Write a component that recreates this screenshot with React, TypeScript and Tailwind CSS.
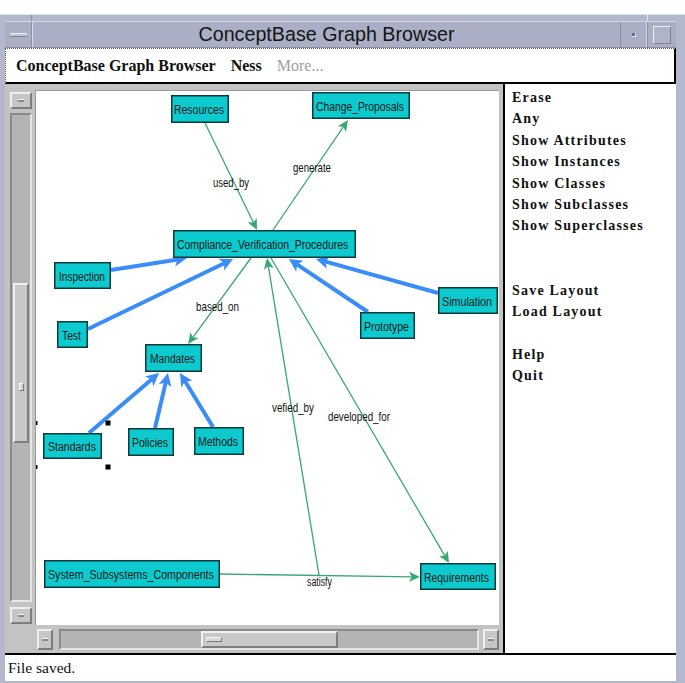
import React from "react";

type Pt = { x: number; y: number };

type NodeDef = {
  label: string;
  x: number;
  y: number;
  w: number;
  h: number;
  tx: number;
  tw: number;
  cy: number;
};

const NODES: NodeDef[] = [
  { label: "Resources", x: 170, y: 94, w: 58, h: 28, tx: 173, tw: 50, cy: 108 },
  { label: "Change_Proposals", x: 311, y: 91, w: 98, h: 27, tx: 315, tw: 88, cy: 105 },
  { label: "Compliance_Verification_Procedures", x: 172, y: 229, w: 183, h: 28, tx: 176, tw: 172, cy: 243 },
  { label: "Inspection", x: 53, y: 261, w: 57, h: 27, tx: 58, tw: 46, cy: 275 },
  { label: "Test", x: 56, y: 320, w: 31, h: 27, tx: 61, tw: 20, cy: 334 },
  { label: "Simulation", x: 437, y: 286, w: 60, h: 27, tx: 441, tw: 50, cy: 300 },
  { label: "Prototype", x: 359, y: 311, w: 55, h: 27, tx: 363, tw: 45, cy: 325 },
  { label: "Mandates", x: 144, y: 343, w: 57, h: 28, tx: 149, tw: 45, cy: 357 },
  { label: "Standards", x: 42, y: 432, w: 59, h: 26, tx: 47, tw: 48, cy: 445 },
  { label: "Policies", x: 127, y: 427, w: 46, h: 28, tx: 131, tw: 36, cy: 441 },
  { label: "Methods", x: 193, y: 426, w: 50, h: 28, tx: 197, tw: 40, cy: 440 },
  { label: "System_Subsystems_Components", x: 43, y: 559, w: 176, h: 28, tx: 47, tw: 166, cy: 573 },
  { label: "Requirements", x: 419, y: 562, w: 76, h: 27, tx: 423, tw: 65, cy: 576 },
];

const GREEN = "#38a873";
const BLUE = "#3a8df8";

const GREEN_EDGES: [Pt, Pt][] = [
  [{ x: 204, y: 122 }, { x: 256, y: 229 }],
  [{ x: 272, y: 229 }, { x: 347, y: 119 }],
  [{ x: 250, y: 257 }, { x: 187, y: 343 }],
  [{ x: 318, y: 574 }, { x: 266, y: 257 }],
  [{ x: 270, y: 257 }, { x: 448, y: 562 }],
  [{ x: 219, y: 573 }, { x: 419, y: 576 }],
];

const BLUE_EDGES: [Pt, Pt][] = [
  [{ x: 110, y: 269 }, { x: 186, y: 257 }],
  [{ x: 87, y: 328 }, { x: 232, y: 258 }],
  [{ x: 367, y: 311 }, { x: 288, y: 258 }],
  [{ x: 437, y: 292 }, { x: 315, y: 258 }],
  [{ x: 88, y: 432 }, { x: 158, y: 372 }],
  [{ x: 154, y: 427 }, { x: 167, y: 372 }],
  [{ x: 212, y: 426 }, { x: 179, y: 372 }],
];

const EDGE_LABELS = [
  { t: "used_by", x: 212, w: 36, cy: 182 },
  { t: "generate", x: 292, w: 38, cy: 167 },
  { t: "based_on", x: 195, w: 43, cy: 306 },
  { t: "vefied_by", x: 271, w: 42, cy: 407 },
  { t: "developed_for", x: 327, w: 62, cy: 416 },
  { t: "satisfy", x: 306, w: 25, cy: 581 },
];

// Arial / Liberation Sans advance widths (1/1000 em)
const ADV: Record<string, number> = {
  a: 556, b: 556, c: 500, d: 556, e: 556, f: 278, g: 556, h: 556, i: 222, j: 222, k: 500, l: 222, m: 833,
  n: 556, o: 556, p: 556, q: 556, r: 333, s: 500, t: 278, u: 556, v: 500, w: 722, x: 500, y: 500, z: 500,
  A: 667, B: 667, C: 722, D: 722, E: 667, F: 611, G: 778, H: 722, I: 278, J: 500, K: 667, L: 556, M: 833,
  N: 722, O: 778, P: 667, Q: 778, R: 722, S: 667, T: 611, U: 722, V: 667, W: 944, X: 667, Y: 667, Z: 611,
  _: 556,
};

function naturalWidth(s: string, size: number) {
  let sum = 0;
  for (const ch of s) sum += ADV[ch] ?? 556;
  return (sum * size) / 1000;
}

// Narrow label: set at its natural size, then squeezed horizontally to the given width.
function NarrowText({
  text,
  x,
  y,
  width,
  size,
  fill,
}: {
  text: string;
  x: number;
  y: number;
  width: number;
  size: number;
  fill: string;
}) {
  const sx = width / naturalWidth(text, size);
  return (
    <text
      transform={`translate(${x} ${y}) scale(${sx.toFixed(4)} 1)`}
      fontFamily="'Liberation Sans', Arial, sans-serif"
      fontSize={size}
      fill={fill}
    >
      {text}
    </text>
  );
}

function Edge({
  a,
  b,
  color,
  width,
  hl,
  hw,
}: {
  a: Pt;
  b: Pt;
  color: string;
  width: number;
  hl: number;
  hw: number;
}) {
  const dx = b.x - a.x;
  const dy = b.y - a.y;
  const len = Math.hypot(dx, dy);
  const ux = dx / len;
  const uy = dy / len;
  const bx = b.x - ux * hl;
  const by = b.y - uy * hl;
  const px = -uy;
  const py = ux;
  const pts = `${b.x},${b.y} ${bx + (px * hw) / 2},${by + (py * hw) / 2} ${b.x - ux * hl * 0.75},${b.y - uy * hl * 0.75} ${bx - (px * hw) / 2},${by - (py * hw) / 2}`;
  return (
    <g>
      <line x1={a.x} y1={a.y} x2={b.x - ux * hl * 0.7} y2={b.y - uy * hl * 0.7} stroke={color} strokeWidth={width} />
      <polygon points={pts} fill={color} />
    </g>
  );
}

function Graph() {
  return (
    <svg width={464} height={535} viewBox="35 90 464 535" className="block">
      {GREEN_EDGES.map(([a, b], i) => (
        <Edge key={`g${i}`} a={a} b={b} color={GREEN} width={1.3} hl={11} hw={10} />
      ))}
      {BLUE_EDGES.map(([a, b], i) => (
        <Edge key={`b${i}`} a={a} b={b} color={BLUE} width={4} hl={13} hw={13} />
      ))}
      {EDGE_LABELS.map((l) => (
        <NarrowText key={l.t} text={l.t} x={l.x} y={l.cy + 4} width={l.w} size={12} fill="#111" />
      ))}
      {NODES.map((n) => (
        <g key={n.label}>
          <rect x={n.x + 0.75} y={n.y + 0.75} width={n.w - 1.5} height={n.h - 1.5} fill="#0ccacd" stroke="#123a3c" strokeWidth={1.5} />
          <NarrowText text={n.label} x={n.tx} y={n.cy + 5} width={n.tw} size={13.5} fill="#0a1a1a" />
        </g>
      ))}
      {/* selection handles */}
      <rect x={104.5} y={419.5} width={5} height={5} fill="#000" />
      <rect x={104.5} y={463.5} width={5} height={5} fill="#000" />
      <rect x={35} y={420} width={1.5} height={4} fill="#000" />
      <rect x={35} y={464} width={1.5} height={4} fill="#000" />
    </svg>
  );
}

function ArrowButton({ className }: { className: string }) {
  return (
    <div
      className={`bg-[#c6c6c6] border-t-2 border-l-2 border-b-2 border-r-2 border-t-[#efefef] border-l-[#efefef] border-b-[#7d7d7d] border-r-[#7d7d7d] flex items-center justify-center ${className}`}
    >
      <div className="w-[6px] h-[3px] bg-[#8a8a8a] border-t border-[#f2f2f2]" />
    </div>
  );
}

const MENU_ITEMS: (string | null)[] = [
  "Erase",
  "Any",
  "Show Attributes",
  "Show Instances",
  "Show Classes",
  "Show Subclasses",
  "Show Superclasses",
  null,
  null,
  "Save Layout",
  "Load Layout",
  null,
  "Help",
  "Quit",
];

export default function App() {
  return (
    <div className="w-[685px] h-[683px] bg-white pt-[14px] overflow-hidden">
      <div className="h-[669px] bg-[#b4b8cc] flex flex-col pl-[5px] pr-[9px] border-t border-[#dcdee8]">
        {/* window title bar */}
        <div className="h-[6px] flex">
          <div className="w-[27px] border-r border-[#8d91a6]" />
          <div className="flex-1" />
          <div className="w-[29px] border-l border-[#e2e4ee]" />
        </div>
        <div className="h-[27px] flex bg-[#aaafc5] border-t border-[#d6d9e4] border-b border-b-[#8a8ea4]">
          <div className="w-[27px] flex items-center justify-center border-r border-[#8a8ea4]">
            <div className="w-[17px] h-[4px] bg-[#c3c6d6] border-t border-[#eceef5] border-b border-b-[#7c8096]" />
          </div>
          <div
            className="flex-1 flex items-center justify-center text-[19.7px] text-[#141414] border-l border-[#d6d9e4]"
            style={{ fontFamily: "'Liberation Sans', Arial, sans-serif" }}
          >
            ConceptBase Graph Browser
          </div>
          <div className="w-[27px] flex items-center justify-center border-l border-[#8a8ea4] border-r border-r-[#d6d9e4]">
            <div className="w-[4px] h-[4px] bg-[#6c7086] border-b border-r border-[#e6e8f0]" />
          </div>
          <div className="w-[29px] flex items-center justify-center border-l border-[#8a8ea4]">
            <div className="w-[18px] h-[18px] border border-t-[#eceef5] border-l-[#eceef5] border-b-[#7c8096] border-r-[#7c8096] bg-[#b0b4c9]" />
          </div>
        </div>

        {/* menu bar */}
        <div
          className="h-[36px] bg-white border-t border-l border-dotted border-[#555] border-b-2 border-b-black border-r-2 border-r-black flex items-center gap-[15px] pl-[10px] text-[16px] font-bold"
          style={{ fontFamily: "'Liberation Serif', 'Times New Roman', serif", borderBottomStyle: "solid", borderRightStyle: "solid" }}
        >
          <span className="text-[#111]">ConceptBase Graph Browser</span>
          <span className="text-[#111]">Ness</span>
          <span className="text-[#a0a0a0] font-normal">More...</span>
        </div>

        {/* main area */}
        <div className="h-[571px] flex">
          {/* graph panel */}
          <div className="w-[500px] bg-[#c3c3c3] border-r-2 border-b-2 border-black flex">
            {/* vertical scrollbar */}
            <div className="w-[28px] pl-[5px] pt-[8px] flex flex-col">
              <ArrowButton className="w-[22px] h-[17px]" />
              <div className="mt-[4px] w-[22px] h-[489px] bg-[#b4b4b4] border-t-2 border-l-2 border-t-[#8a8a8a] border-l-[#8a8a8a] border-b-2 border-r-2 border-b-[#e6e6e6] border-r-[#e6e6e6] flex flex-col items-center">
                <div className="mt-[168px] w-[16px] h-[160px] bg-[#c8c8c8] border-t-2 border-l-2 border-t-[#f0f0f0] border-l-[#f0f0f0] border-b-2 border-r-2 border-b-[#7e7e7e] border-r-[#7e7e7e] flex flex-col items-center pt-[98px]">
                  <div className="w-[5px] h-[8px] bg-[#d8d8d8] border border-t-[#fafafa] border-l-[#fafafa] border-b-[#777] border-r-[#777]" />
                </div>
              </div>
              <ArrowButton className="mt-[5px] w-[22px] h-[17px]" />
            </div>

            {/* canvas column */}
            <div className="ml-[2px] flex-1 flex flex-col pt-[6px]">
              <div className="w-[464px] h-[535px] bg-white border-t border-l border-[#9a9a9a] overflow-hidden">
                <Graph />
              </div>
              {/* horizontal scrollbar */}
              <div className="h-[28px] flex items-start pt-[4px] pl-[2px]">
                <ArrowButton className="w-[16px] h-[21px]" />
                <div className="ml-[6px] w-[420px] h-[21px] bg-[#b4b4b4] border-t-2 border-l-2 border-t-[#8a8a8a] border-l-[#8a8a8a] border-b-2 border-r-2 border-b-[#e6e6e6] border-r-[#e6e6e6] flex items-center">
                  <div className="ml-[140px] w-[137px] h-[17px] bg-[#c8c8c8] border-t-2 border-l-2 border-t-[#f0f0f0] border-l-[#f0f0f0] border-b-2 border-r-2 border-b-[#7e7e7e] border-r-[#7e7e7e] flex items-center pl-[3px]">
                    <div className="w-[16px] h-[5px] bg-[#d8d8d8] border border-t-[#fafafa] border-l-[#fafafa] border-b-[#777] border-r-[#777]" />
                  </div>
                </div>
                <ArrowButton className="ml-[4px] w-[16px] h-[21px]" />
              </div>
            </div>
          </div>

          {/* command panel */}
          <div
            className="flex-1 bg-white border-b-2 border-black pl-[7px] pt-[3px] text-[14px] font-bold tracking-[1.2px] text-[#111]"
            style={{ fontFamily: "'Liberation Serif', 'Times New Roman', serif" }}
          >
            {MENU_ITEMS.map((m, i) => (
              <div key={i} className="h-[21.4px] leading-[21.4px] whitespace-pre">
                {m ?? " "}
              </div>
            ))}
          </div>
        </div>

        {/* status line */}
        <div
          className="h-[26px] bg-white flex items-center pl-[3px] text-[15.5px] text-[#111]"
          style={{ fontFamily: "'Liberation Serif', 'Times New Roman', serif" }}
        >
          File saved.
        </div>
      </div>
    </div>
  );
}
